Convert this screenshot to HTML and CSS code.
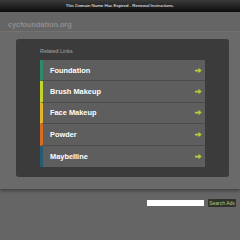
FILE: index.html
```html
<!DOCTYPE html>
<html lang="en">
<head>
    <meta charset="UTF-8">
    <meta name="viewport" content="width=device-width, initial-scale=1.0">
    <title>cycfoundation.org</title>
    <link rel="stylesheet" href="styles.css">
</head>
<body>

<div class="topbar">This Domain Name Has Expired - Renewal Instructions.</div>

<div class="header">cycfoundation.org</div>

<div class="main">
    <div class="panel">
        <div class="panel-title">Related Links</div>
        <ul class="links">
            <li class="link c1"><span>Foundation</span><svg class="arrow" viewBox="0 0 8 8"><path d="M0 3h4V0.8L7.6 4 4 7.2V5H0z"/></svg></li>
            <li class="link c2"><span>Brush Makeup</span><svg class="arrow" viewBox="0 0 8 8"><path d="M0 3h4V0.8L7.6 4 4 7.2V5H0z"/></svg></li>
            <li class="link c3"><span>Face Makeup</span><svg class="arrow" viewBox="0 0 8 8"><path d="M0 3h4V0.8L7.6 4 4 7.2V5H0z"/></svg></li>
            <li class="link c4"><span>Powder</span><svg class="arrow" viewBox="0 0 8 8"><path d="M0 3h4V0.8L7.6 4 4 7.2V5H0z"/></svg></li>
            <li class="link c5"><span>Maybelline</span><svg class="arrow" viewBox="0 0 8 8"><path d="M0 3h4V0.8L7.6 4 4 7.2V5H0z"/></svg></li>
        </ul>
    </div>
</div>

<form class="search">
    <input type="text" class="search-input">
    <button type="button" class="search-btn">Search Ads</button>
</form>

</body>
</html>
```

FILE: styles.css
```css
body {
    margin: 0;
    background-color: #656565;
    font-family: "Liberation Sans", Arial, sans-serif;
}
.topbar {
    height: 12px;
    line-height: 12px;
    background: linear-gradient(#3a3a3a, #0c0c0c);
    color: #fff;
    font-size: 4.4px;
    text-align: center;
}
.header {
    height: 20px;
    line-height: 26px;
    padding-left: 8px;
    box-sizing: border-box;
    color: #8e8e8e;
    font-size: 7.3px;
    font-weight: bold;
    border-bottom: 1px solid #747474;
}
.main {
    background-color: #6a6a6a;
    padding: 7px 11px 12px 16px;
    box-shadow: 0 2px 3px rgba(0, 0, 0, 0.35);
}
.panel {
    background-color: #3b3b3b;
    border-radius: 3px;
    padding: 8px 24px 10px 24px;
}
.panel-title {
    color: #a8a8a8;
    font-size: 5.4px;
    height: 13px;
    line-height: 8px;
}
.links {
    list-style: none;
    margin: 0;
    padding: 0;
}
.link {
    display: flex;
    align-items: center;
    justify-content: space-between;
    height: 21.4px;
    box-sizing: border-box;
    padding: 0 3px 0 7px;
    background-color: #5e5e5e;
    border-left: 3px solid #2f8b6c;
    border-bottom: 1px solid #4c4c4c;
    color: #fff;
    font-size: 7.4px;
    font-weight: bold;
}
.link:last-child {
    border-bottom: none;
}
.c1 { border-left-color: #2e8a6b; }
.c2 { border-left-color: #c2d52e; }
.c3 { border-left-color: #e2b42c; }
.c4 { border-left-color: #d46d1f; }
.c5 { border-left-color: #265b73; }
.arrow {
    width: 7px;
    height: 7px;
    fill: #b4d034;
}
.search {
    display: flex;
    justify-content: flex-end;
    align-items: center;
    gap: 4px;
    margin: 10px 4px 0 0;
}
.search-input {
    width: 57px;
    height: 6px;
    padding: 0;
    border: none;
    background-color: #fff;
}
.search-btn {
    width: 28px;
    height: 8px;
    padding: 0;
    border: none;
    border-radius: 1px;
    background-color: #30332a;
    color: #b8c97c;
    font-family: "Liberation Sans", Arial, sans-serif;
    font-size: 5px;
    line-height: 8px;
}
```
